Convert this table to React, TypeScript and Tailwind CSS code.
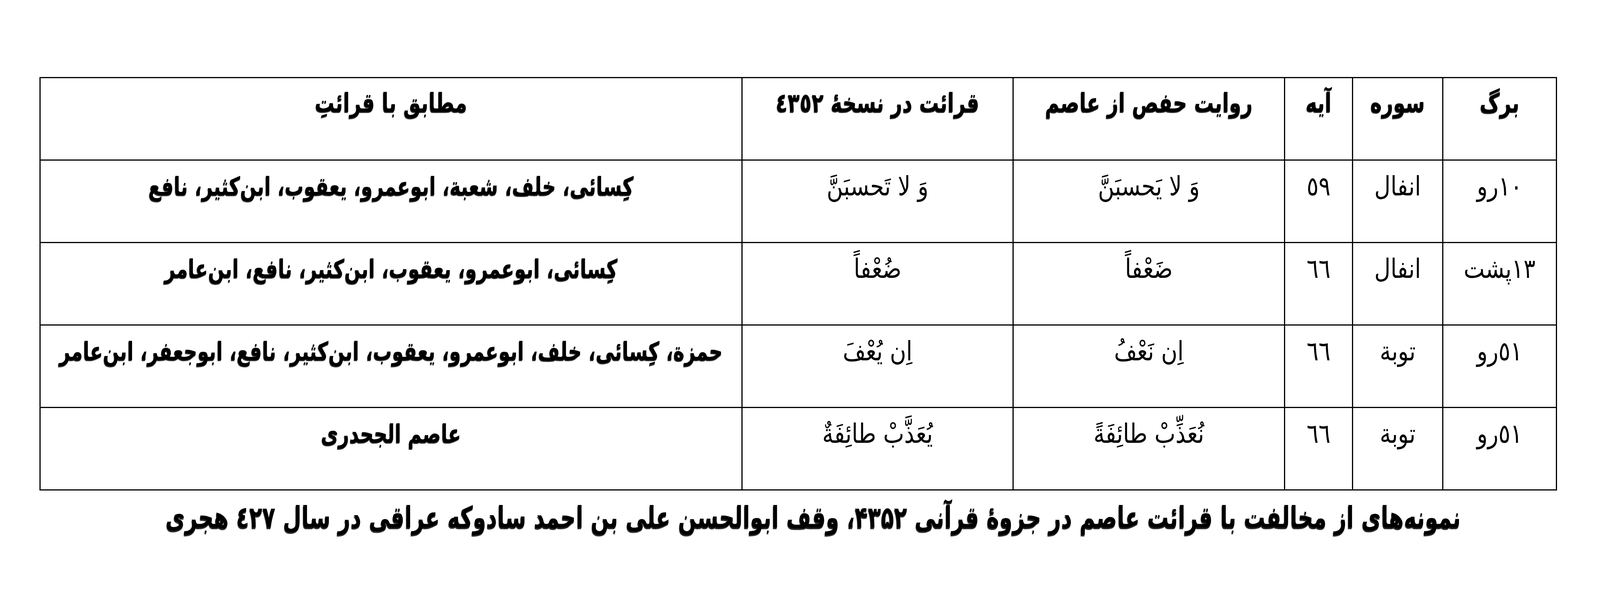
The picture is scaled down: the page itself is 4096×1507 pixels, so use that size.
import * as React from 'react';

type Cell = { text: string; kind: 'head' | 'strong' | 'plain' };

const HEADERS = ['برگ', 'سوره', 'آیه', 'روایت حفص از عاصم', 'قرائت در نسخهٔ ٤٣٥٢', 'مطابق با قرائتِ'];

const ROWS: string[][] = [
  ['١٠رو', 'انفال', '٥٩', 'وَ لا یَحسبَنَّ', 'وَ لا تَحسبَنَّ', 'کِسائی، خلف، شعبة، ابوعمرو، یعقوب، ابن‌کثیر، نافع'],
  ['١٣پشت', 'انفال', '٦٦', 'ضَعْفاً', 'ضُعْفاً', 'کِسائی، ابوعمرو، یعقوب، ابن‌کثیر، نافع، ابن‌عامر'],
  ['٥١رو', 'توبة', '٦٦', 'اِن نَعْفُ', 'اِن یُعْفَ', 'حمزة، کِسائی، خلف، ابوعمرو، یعقوب، ابن‌کثیر، نافع، ابوجعفر، ابن‌عامر'],
  ['٥١رو', 'توبة', '٦٦', 'نُعَذِّبْ طائِفَةً', 'یُعَذَّبْ طائِفَةٌ', 'عاصم الجحدری'],
];

const bold =
  "font-['DejaVu_Sans_Condensed','DejaVu_Sans',sans-serif] font-bold [text-shadow:-1px_3px_1px_rgba(0,0,0,0.85)]";
const plain = "font-['DejaVu_Sans',sans-serif] font-normal";

const KIND: Record<Cell['kind'], string> = {
  head: `pt-[35px] text-[56px] ${bold}`,
  strong: `pt-[39px] text-[54px] ${bold}`,
  plain: `pt-[37px] text-[57px] ${plain}`,
};

function TableCell({ text, kind }: Cell) {
  const [pad, ...rest] = KIND[kind].split(' ');
  return (
    <div className={`h-[208px] bg-white px-2 text-center ${pad}`}>
      <span className={`inline-block scale-y-[1.2] whitespace-nowrap leading-[1] text-black ${rest.join(' ')}`}>
        {text}
      </span>
    </div>
  );
}

export default function App() {
  return (
    <div className="min-h-[1507px] w-[4096px] bg-white pt-[197px]" dir="ltr">
      <div
        dir="rtl"
        className="ml-[101px] grid w-[3885px] grid-cols-[288px_228px_171px_692px_691px_1794px] gap-[3px] bg-black p-[3px]"
      >
        {HEADERS.map((h, i) => (
          <TableCell key={`h${i}`} text={h} kind="head" />
        ))}
        {ROWS.map((row, r) =>
          row.map((t, c) => <TableCell key={`${r}-${c}`} text={t} kind={c === 5 ? 'strong' : 'plain'} />)
        )}
      </div>
      <div dir="rtl" className="mt-[38px] ml-[101px] w-[3885px] pr-0 pl-[76px] text-center">
        <span className={`inline-block scale-y-[1.25] text-[61px] leading-[1] text-black ${bold}`}>
          نمونه‌های از مخالفت با قرائت عاصم در جزوهٔ قرآنی ۴۳۵۲، وقف ابوالحسن علی بن احمد سادوکه عراقی در سال ٤٢٧ هجری
        </span>
      </div>
    </div>
  );
}
